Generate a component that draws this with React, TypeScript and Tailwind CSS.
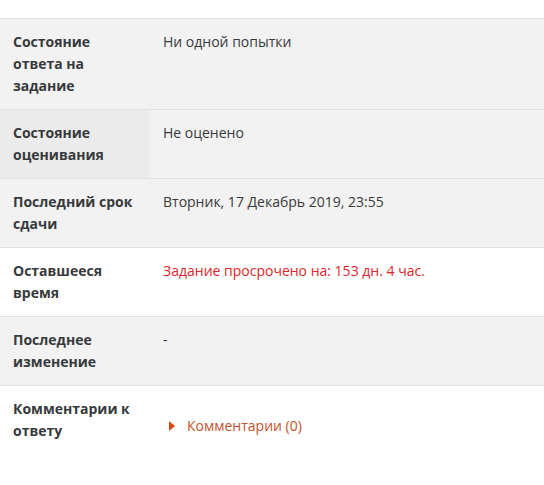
import React from 'react';

type Row = {
  label: string;
  value: React.ReactNode;
  bg: string;
  headBg?: string;
  valueCls?: string;
};

const rows: Row[] = [
  { label: 'Состояние ответа на задание', value: 'Ни одной попытки', bg: 'bg-[#f2f2f2]' },
  {
    label: 'Состояние оценивания',
    value: 'Не оценено',
    bg: 'bg-[#f2f2f2]',
    headBg: 'bg-[#ebebeb]',
  },
  { label: 'Последний срок сдачи', value: 'Вторник, 17 Декабрь 2019, 23:55', bg: 'bg-[#f2f2f2]' },
  {
    label: 'Оставшееся время',
    value: <span className="text-[#e0262b]">Задание просрочено на: 153 дн. 4 час.</span>,
    bg: 'bg-white',
  },
  { label: 'Последнее изменение', value: '-', bg: 'bg-[#f2f2f2]' },
  {
    label: 'Комментарии к ответу',
    value: (
      <span className="inline-flex items-center text-[#c4522b]">
        <span className="mr-[12px] ml-[6px] inline-block h-0 w-0 border-y-[5px] border-l-[6px] border-y-transparent border-l-[#d9480f]" />
        Комментарии (0)
      </span>
    ),
    bg: 'bg-white',
    valueCls: 'pt-[29px]',
  },
];

export default function App() {
  return (
    <div className="min-h-[485px] w-[544px] bg-white pt-[18px] font-['Open_Sans','Liberation_Sans',sans-serif] text-[14px] leading-[22px] text-[#373a3c]">
      <table className="w-full border-collapse">
        <tbody>
          {rows.map((r) => (
            <tr key={r.label} className={`border-t border-[#dee2e6] ${r.bg}`}>
              <th
                className={`w-[150px] p-[12px] pl-[13px] text-left align-top font-bold ${r.headBg ?? ''}`}
              >
                {r.label}
              </th>
              <td className={`p-[12px] pl-[13px] align-top font-normal ${r.valueCls ?? ''}`}>
                {r.value}
              </td>
            </tr>
          ))}
        </tbody>
      </table>
    </div>
  );
}
